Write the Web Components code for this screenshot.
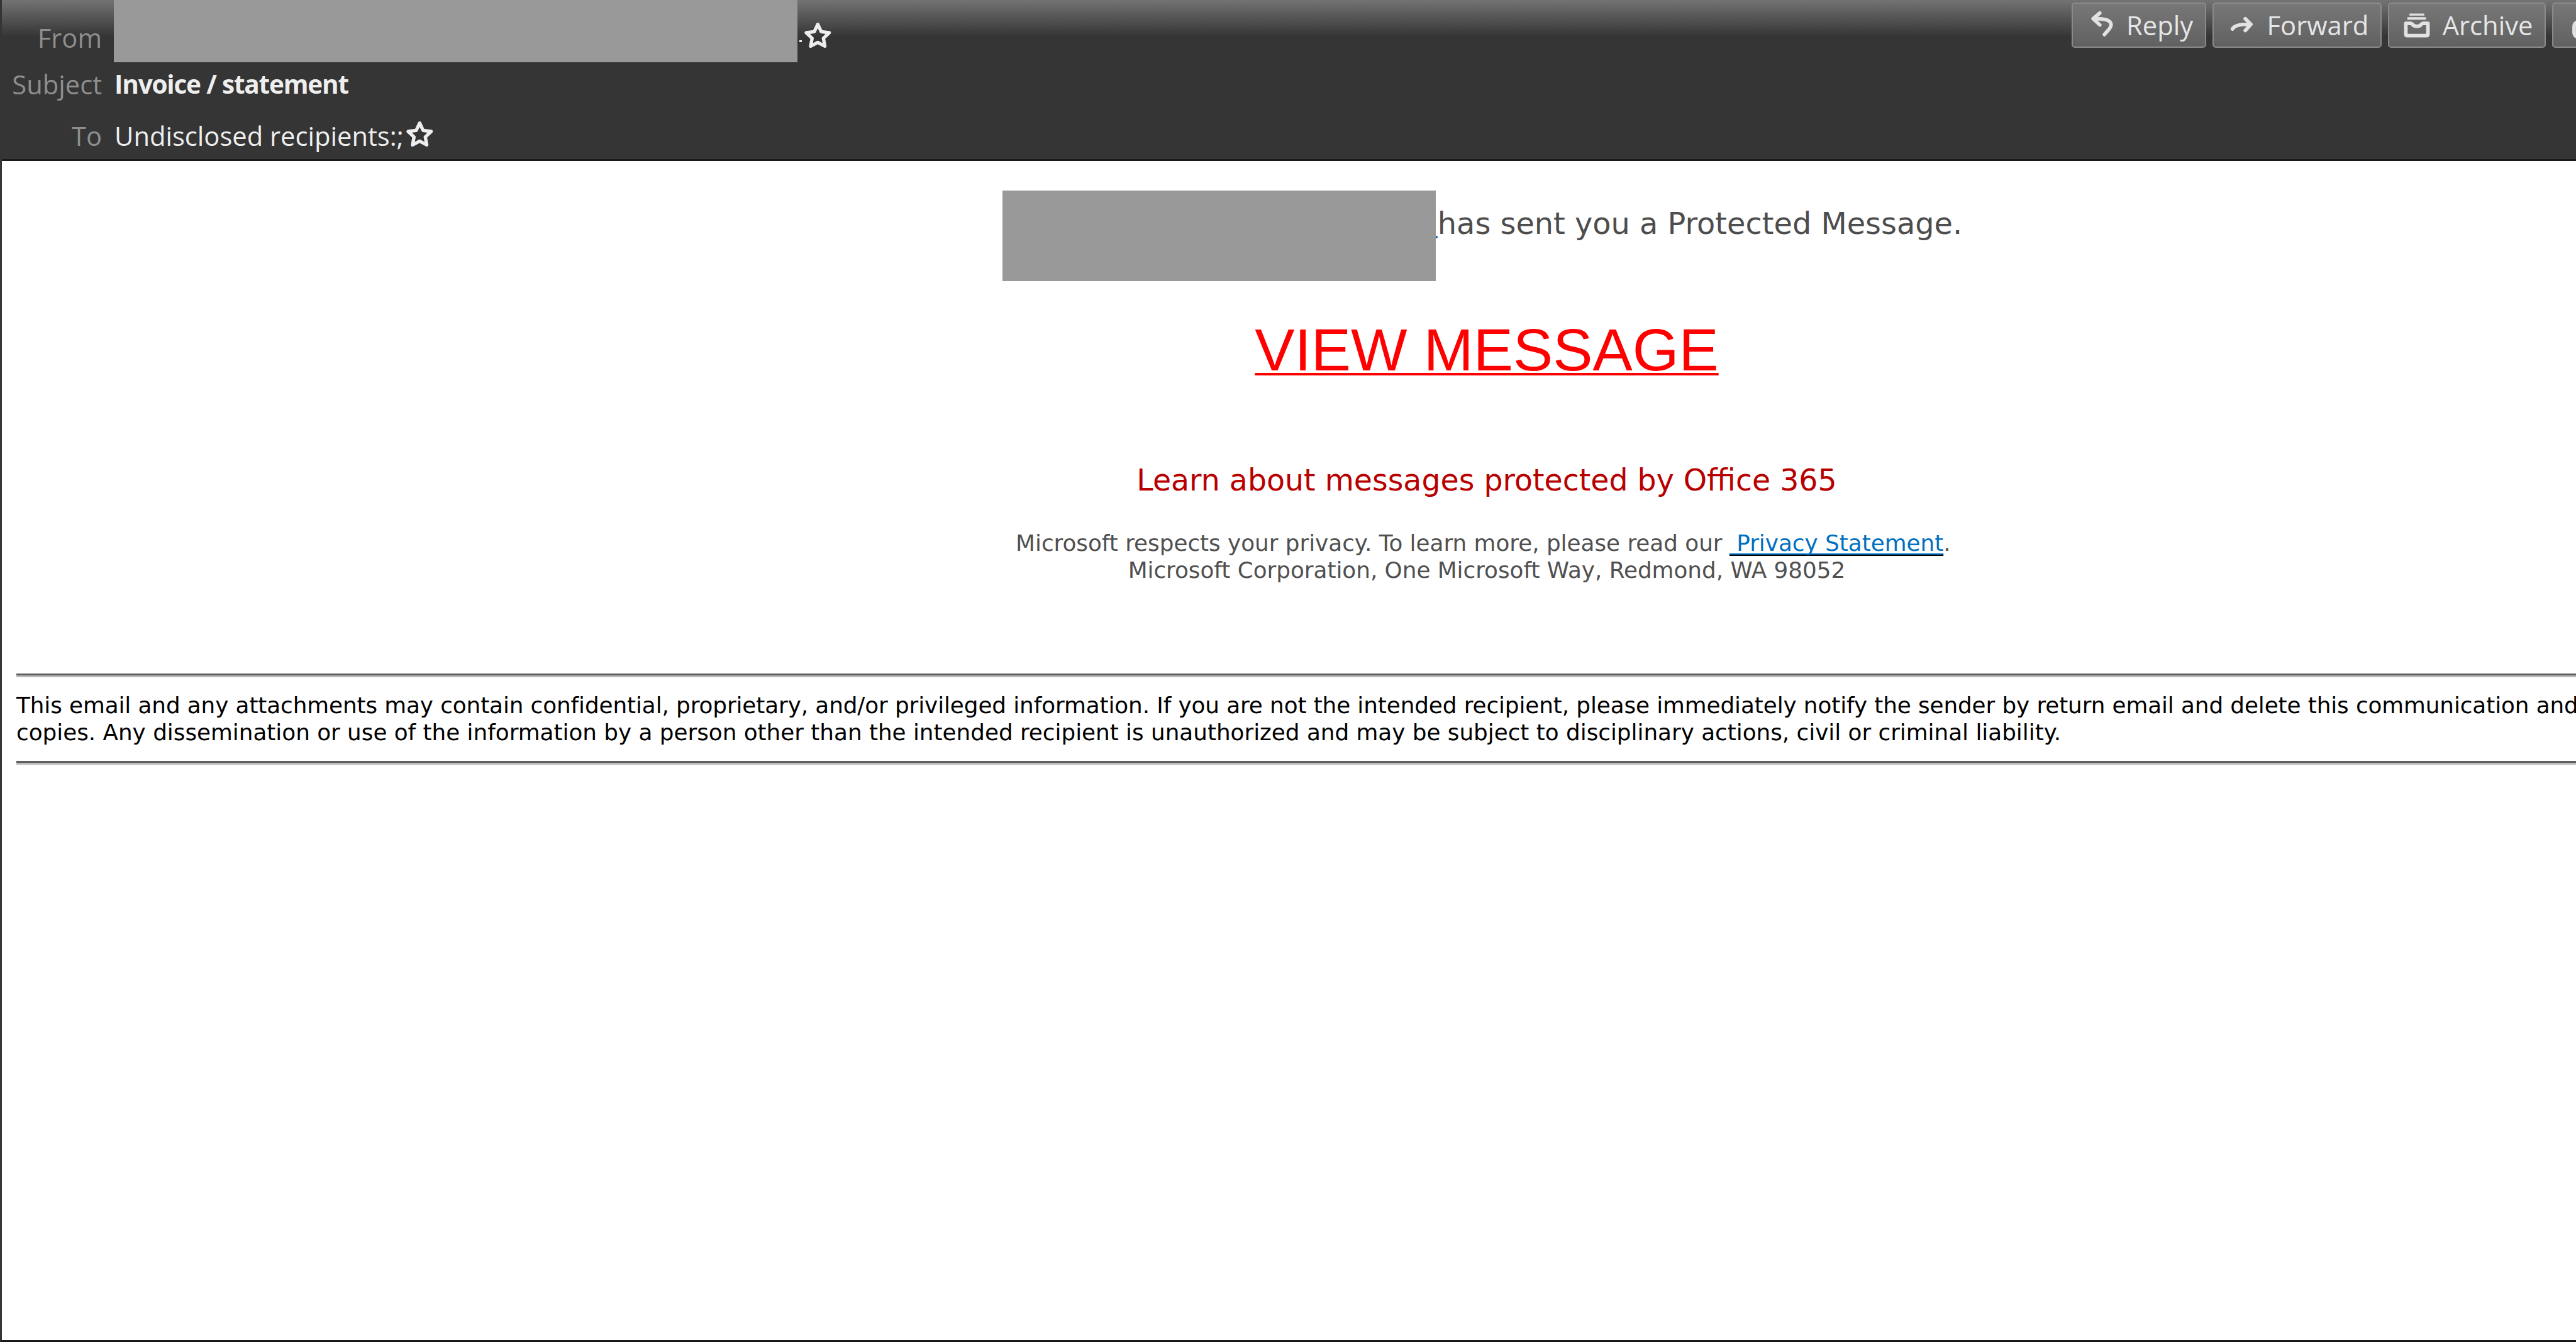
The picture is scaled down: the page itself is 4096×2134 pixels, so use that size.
<!DOCTYPE html>
<html>
<head>
<meta charset="utf-8">
<title>Invoice / statement</title>
<style>
  html, body { margin: 0; padding: 0; width: 4096px; height: 2134px; overflow: hidden; background: #fff; }
</style>
</head>
<body>
<mail-view>
  <mail-header slot="header">
    <header-field label="From" slot="fields" class="from" starred>
      <span style="display:inline-block;width:1089px"></span><span style="display:inline-block;width:4px;height:3px;background:#eee;vertical-align:9px"></span>
    </header-field>
    <header-field label="Subject" slot="fields" strong>Invoice / statement</header-field>
    <header-field label="To" slot="fields" starred>Undisclosed recipients:;</header-field>
    <toolbar-button icon="reply" slot="actions">Reply</toolbar-button>
    <toolbar-button icon="forward" slot="actions">Forward</toolbar-button>
    <toolbar-button icon="archive" slot="actions">Archive</toolbar-button>
    <toolbar-button icon="junk" slot="actions">Junk</toolbar-button>
  </mail-header>
  <mail-body slot="body"></mail-body>
</mail-view>

<script>
const icons = {
  reply: `<path d="M24 7 L11 18 L24 30 M12 18 C30 17 46 20 46 30 C46 37 38 42 33 49"/>`,
  forward: `<path d="M33 18 L44 29 L33 41 M8 38 C12 31 22 29 43 29"/>`,
  archive: `<path d="M11 10 H40" stroke-width="4" stroke-linecap="butt"/>
            <path d="M7 17.5 H43" stroke-width="5" stroke-linecap="butt"/>
            <path d="M4 27 H14 C17 27 17 33 25.5 33 C34 33 34 27 37 27 H47 V48 Q47 51 44 51 H7 Q4 51 4 48 Z"/>`,
  junk: `<rect x="12" y="24" width="30" height="30" rx="9"/>`,
};

const fontStack = `"Open Sans", "Noto Sans", sans-serif`;

class MailView extends HTMLElement {
  constructor() {
    super();
    this.attachShadow({ mode: "open" });
    this.shadowRoot.innerHTML = `
      <style>
        :host {
          display: flex;
          flex-direction: column;
          box-sizing: border-box;
          width: 4096px;
          height: 2134px;
          overflow: hidden;
          background: #fff;
          border-left: 3px solid #353535;
          border-bottom: 3.5px solid #1a1a1a;
        }
      </style>
      <slot name="header"></slot>
      <slot name="body"></slot>
    `;
  }
}

class MailHeader extends HTMLElement {
  constructor() {
    super();
    this.attachShadow({ mode: "open" });
    this.shadowRoot.innerHTML = `
      <style>
        :host {
          display: flex;
          flex: none;
          position: relative;
          box-sizing: border-box;
          height: 255.5px;
          overflow: hidden;
          border-bottom: 3.5px solid #1a1a1a;
          background: linear-gradient(#737373 0, #353535 58px, #353535 100%);
          font-family: ${fontStack};
          font-size: 41.7px;
        }
        .fields {
          flex: none;
          width: 3291px;
          padding-top: 38.6px;
          box-sizing: border-box;
        }
        .actions {
          flex: none;
          display: flex;
          gap: 10px;
          padding-top: 4px;
          align-items: flex-start;
        }
        .redaction {
          position: absolute;
          left: 178px;
          top: 0;
          width: 1087px;
          height: 99px;
          background: #999;
        }
      </style>
      <div class="fields"><slot name="fields"></slot></div>
      <div class="actions"><slot name="actions"></slot></div>
      <div class="redaction"></div>
    `;
  }
}

class HeaderField extends HTMLElement {
  constructor() {
    super();
    this.attachShadow({ mode: "open" });
  }

  connectedCallback() {
    const label = this.getAttribute("label");
    const strong = this.hasAttribute("strong");
    const star = this.hasAttribute("starred")
      ? `<svg class="star" viewBox="0 0 52 52" width="42.6" height="42.6">
           <polygon points="26,4.5 32.76,18.7 48.35,20.74 36.94,31.55 39.81,47.01 26,39.5 12.19,47.01 15.06,31.55 3.65,20.74 19.24,18.7"
             fill="none" stroke="#eeeeee" stroke-width="6.5" stroke-linejoin="round"/>
         </svg>`
      : "";
    this.shadowRoot.innerHTML = `
      <style>
        :host {
          display: grid;
          grid-template-columns: 159px auto;
          column-gap: 20px;
          justify-content: start;
          height: 41px;
          line-height: 41px;
          white-space: nowrap;
        }
        :host(:nth-child(2)) { margin-top: 33px; }
        :host(:nth-child(3)) { margin-top: 41.6px; }
        .label { text-align: right; color: #8e8e8e; }
        .value {
          display: flex;
          align-items: center;
          color: #eeeeee;
          font-weight: ${strong ? 700 : 400};
          font-size: ${strong ? "40.5px" : "inherit"};
          letter-spacing: ${strong ? "-1.2px" : "0"};
        }
        .star { flex: none; margin-left: 4px; margin-top: -5px; }
      </style>
      <div class="label">${label}</div>
      <div class="value"><span><slot></slot></span>${star}</div>
    `;
  }
}

class ToolbarButton extends HTMLElement {
  constructor() {
    super();
    this.attachShadow({ mode: "open" });
  }

  connectedCallback() {
    const icon = icons[this.getAttribute("icon")];
    this.shadowRoot.innerHTML = `
      <style>
        :host {
          display: flex;
          flex: none;
          align-items: center;
          box-sizing: border-box;
          height: 71.5px;
          padding: 0 18.5px 0 23px;
          gap: 20px;
          border: 2.5px solid #8a8a8a;
          border-radius: 5px;
          background: linear-gradient(#777777, #616161);
          color: #e6e6e6;
          white-space: nowrap;
        }
        svg { flex: none; fill: none; stroke: #e2e2e2; stroke-width: 7; stroke-linecap: round; stroke-linejoin: round; }
      </style>
      <svg viewBox="0 0 51 60" width="42" height="49">${icon}</svg>
      <slot></slot>
    `;
  }
}

class MailBody extends HTMLElement {
  constructor() {
    super();
    this.attachShadow({ mode: "open" });
    this.shadowRoot.innerHTML = `
      <style>
        :host {
          display: block;
          position: relative;
          flex: 1;
          min-height: 0;
          overflow: hidden;
          font-family: "DejaVu Sans", Verdana, sans-serif;
          font-size: 35.75px;
          line-height: 43px;
        }
        .inner {
          box-sizing: border-box;
          width: 4676px;
          margin-left: 23px;
          padding-top: 72.5px;
          text-align: center;
        }
        .hero { font-size: 47.8px; line-height: 56px; color: #4d4d4d; white-space: nowrap; }
        .sender {
          display: inline-block;
          width: 678px;
          text-align: right;
          color: #0f6fd0;
          text-decoration: underline;
        }
        .view {
          margin-top: 120px;
          font-family: "Liberation Sans", Arial, sans-serif;
          font-size: 94.8px;
          line-height: 104px;
          color: #ff0000;
          text-decoration: underline 4px;
          text-underline-offset: 4px;
        }
        .learn { margin-top: 127.5px; font-size: 47.4px; line-height: 56px; color: #b80000; }
        .privacy { margin-top: 50.5px; color: #505050; white-space: nowrap; }
        .u-outer { text-decoration: underline #000 3px; text-underline-offset: 5px; text-decoration-skip-ink: none; }
        .u-inner { color: #0070c0; text-decoration: underline #0070c0 1.5px; text-underline-offset: 4px; text-decoration-skip-ink: none; }
        .rule { height: 0; border-top: 3px solid #5f5f5f; border-bottom: 3px solid #bcbcbc; }
        .rule.first { margin-top: 142.5px; }
        .disclaimer { margin-top: 23px; margin-bottom: 24px; text-align: left; color: #000; white-space: nowrap; }
        .disclaimer .tight { letter-spacing: -0.08px; }
        .redaction {
          position: absolute;
          left: 1590.8px;
          top: 47.5px;
          width: 689.6px;
          height: 143.8px;
          background: #999;
        }
      </style>
      <div class="inner">
        <div class="hero"><span class="sender">n</span>has sent you a Protected Message.</div>
        <div class="view">VIEW MESSAGE</div>
        <div class="learn">Learn about messages protected by Office 365</div>
        <div class="privacy">Microsoft respects your privacy. To learn more, please read our <span class="u-outer"><span class="u-inner">&nbsp;Privacy Statement</span></span>.&nbsp;<br>Microsoft Corporation, One Microsoft Way, Redmond, WA 98052</div>
        <div class="rule first"></div>
        <div class="disclaimer"><span class="tight">This email and any attachments may contain confidential, proprietary, and/or privileged information. If you are not the intended recipient, please immediately notify the sender by return email and delete this communication and all</span><br>copies. Any dissemination or use of the information by a person other than the intended recipient is unauthorized and may be subject to disciplinary actions, civil or criminal liability.</div>
        <div class="rule"></div>
      </div>
      <div class="redaction"></div>
    `;
  }
}

customElements.define("mail-view", MailView);
customElements.define("mail-header", MailHeader);
customElements.define("header-field", HeaderField);
customElements.define("toolbar-button", ToolbarButton);
customElements.define("mail-body", MailBody);
</script>
</body>
</html>
